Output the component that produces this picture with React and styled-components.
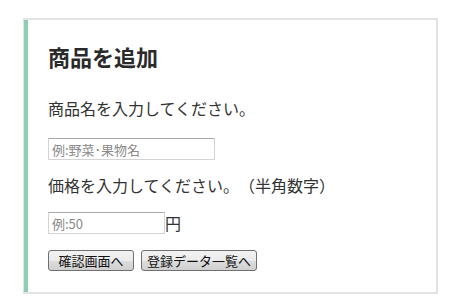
import React from 'react'
import styled, { createGlobalStyle } from 'styled-components'

const GlobalStyle = createGlobalStyle`
  body {
    margin: 0;
    background: #ffffff;
    font-family: "Noto Sans CJK JP", "DejaVu Sans", sans-serif;
    color: #333333;
    text-spacing-trim: space-all;
  }
`

const Card = styled.section`
  box-sizing: border-box;
  width: 415px;
  height: 276px;
  margin: 18px 0 0 23px;
  border: 2px solid #e3e3e3;
  border-left-width: 1px;
  box-shadow: inset 4px 0 0 #8ecfb3;
  padding: 21px 0 0 24px;
`

const Title = styled.h2`
  margin: 0;
  font-size: 22px;
  line-height: 30px;
  font-weight: bold;
  color: #2a2a2a;
`

const Label = styled.p`
  margin: ${p => p.$top}px 0 0;
  font-size: 16px;
  line-height: 24px;
  color: #333333;
`

const Field = styled.div`
  display: flex;
  align-items: center;
  margin-top: ${p => p.$top}px;
  font-size: 16px;
  line-height: 22px;
`

const Input = styled.input`
  box-sizing: border-box;
  width: ${p => p.$w}px;
  height: 22px;
  margin: 0;
  padding: 1px 3px 0;
  border: 1px solid #d4d4d4;
  border-top-color: #a9a9a9;
  border-radius: 0;
  font-family: "Noto Sans CJK JP", sans-serif;
  font-size: 13px;
  outline: none;
  text-spacing-trim: space-all;
  &::placeholder {
    color: #8a8a8a;
  }
`

const Actions = styled.div`
  display: flex;
  gap: 7px;
  margin-top: 16px;
`

const Button = styled.button`
  box-sizing: border-box;
  width: ${p => p.$w}px;
  height: 21px;
  padding: 0;
  border: 1px solid #707070;
  border-radius: 3px;
  background: linear-gradient(#f2f2f2 0%, #ebebeb 50%, #dddddd 51%, #cfcfcf 100%);
  font-family: "Noto Sans CJK JP", sans-serif;
  font-size: 13px;
  line-height: 19px;
  color: #111111;
`

export default function App() {
  return (
    <>
      <GlobalStyle />
      <Card>
        <Title>商品を追加</Title>
        <Label $top={25}>商品名を入力してください。</Label>
        <Field $top={18}>
          <Input $w={167} placeholder="例:野菜･果物名" />
        </Field>
        <Label $top={13}>価格を入力してください。（半角数字）</Label>
        <Field $top={15}>
          <Input $w={117} placeholder="例:50" />
          <span>円</span>
        </Field>
        <Actions>
          <Button $w={86}>確認画面へ</Button>
          <Button $w={116}>登録データ一覧へ</Button>
        </Actions>
      </Card>
    </>
  )
}
